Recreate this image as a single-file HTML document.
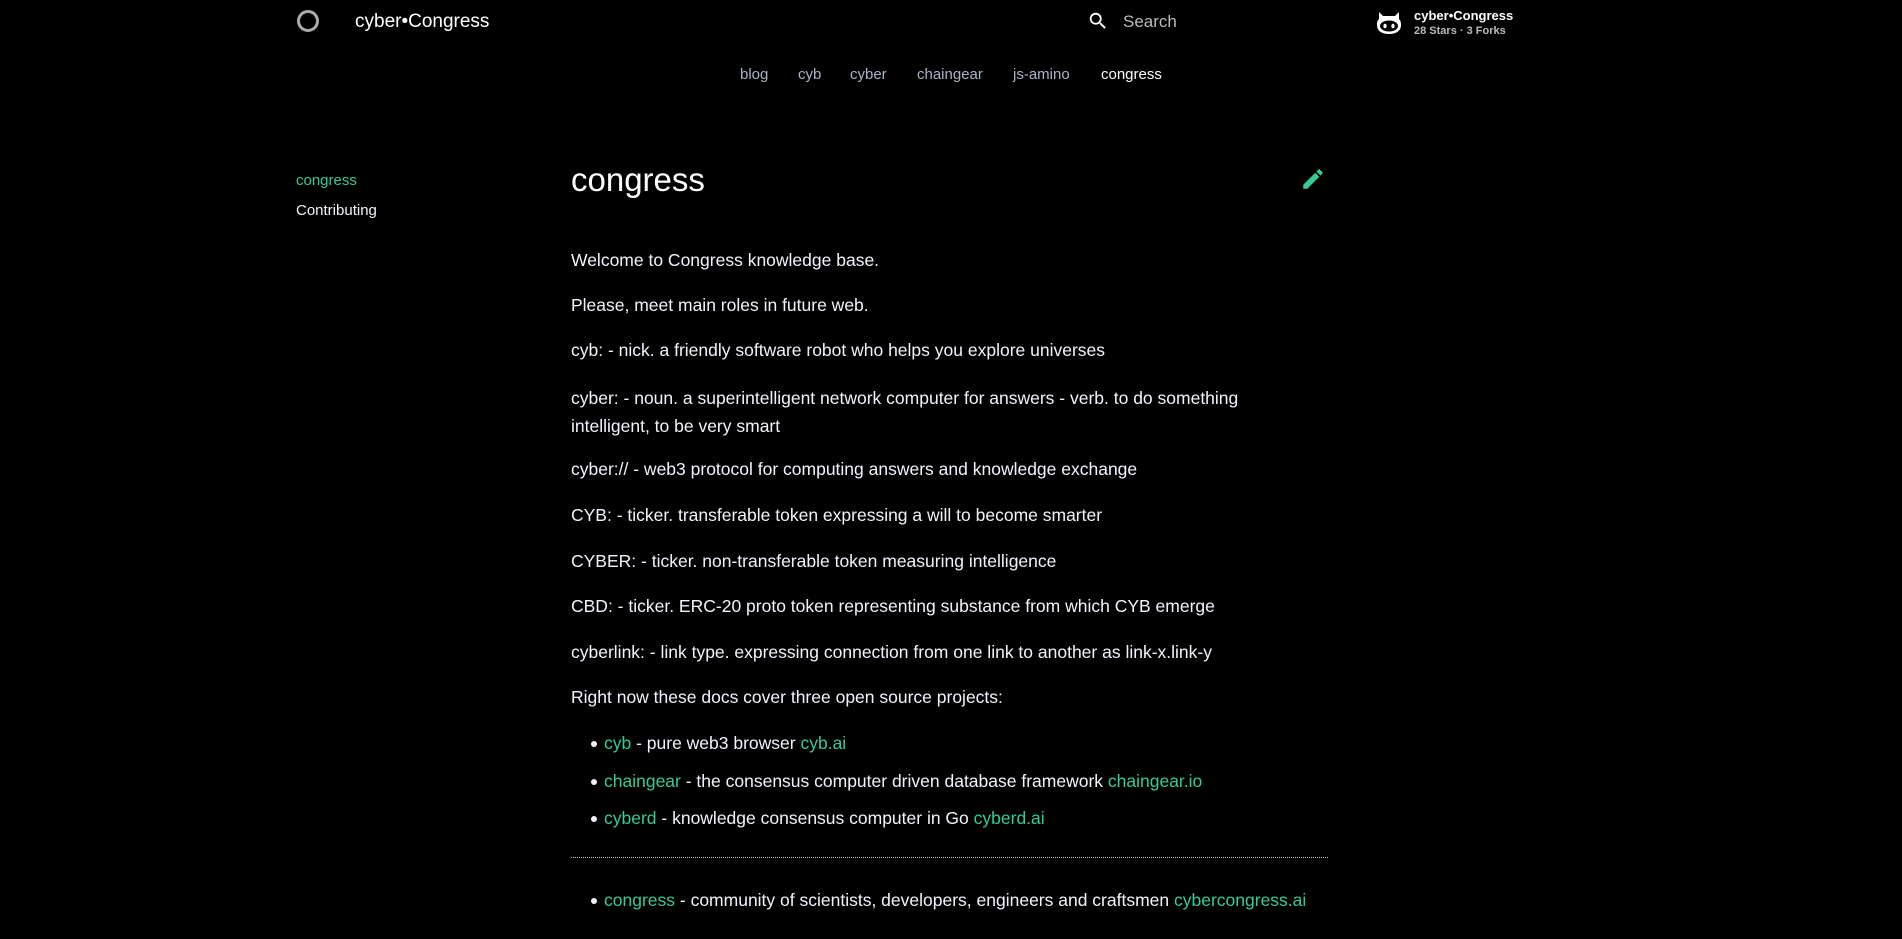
<!DOCTYPE html>
<html><head><meta charset="utf-8"><style>
*{margin:0;padding:0;box-sizing:border-box}
body{width:1902px;height:939px;background:#000;color:#f2f2ff;font-family:"Liberation Sans",sans-serif;overflow:hidden;position:relative}
.a{position:absolute;white-space:nowrap}
.t{color:#36c99a}
.nav span{position:absolute;top:66px;font-size:15px;color:#a8b4c8}
p,li{font-size:17.5px;line-height:22px}
.c{position:absolute;left:571px;width:757px}
.c p{position:absolute;left:0;white-space:nowrap}
.li{position:absolute;left:0;white-space:nowrap}
.li:before{content:"";position:absolute;left:20px;top:9px;width:6px;height:6px;border-radius:50%;background:#f2f2ff}
.li span.x{margin-left:33px}
</style></head><body>
<div class="a" style="left:297px;top:10px;width:22px;height:22px;border-radius:50%;border:3px solid #aaa"></div>
<div class="a" style="left:355px;top:11px;font-size:19px;color:#fff">cyber•Congress</div>
<svg class="a" style="left:1087px;top:10px" width="22" height="22" viewBox="0 0 24 24"><path fill="#fff" d="M9.5 3A6.5 6.5 0 0 1 16 9.5c0 1.61-.59 3.090-1.56 4.23l.27.27h.79l5 5-1.5 1.5-5-5v-.79l-.27-.27A6.52 6.520 0 0 1 9.5 16 6.5 6.5 0 0 1 3 9.5 6.5 6.5 0 0 1 9.5 3m0 2C7 5 5 7 5 9.5S7 14 9.5 14 14 12 14 9.5 12 5 9.5 5z"/></svg>
<div class="a" style="left:1123px;top:12px;font-size:17px;color:#bbb">Search</div>
<svg class="a" style="left:1376px;top:11px" width="26" height="24" viewBox="0 0 26 24"><path fill="#fff" d="M3 1l4 4h12l4-4v7c2 2 2 4 2 6 0 6-5 9-12 9S1 20 1 14c0-2 0-4 2-6z"/><ellipse cx="13" cy="15" rx="9" ry="5.5" fill="#000"/><ellipse cx="9" cy="15" rx="1.6" ry="2.3" fill="#fff"/><ellipse cx="17" cy="15" rx="1.6" ry="2.3" fill="#fff"/></svg>
<div class="a" style="left:1414px;top:8px;font-size:13px;font-weight:bold;color:#fff">cyber•Congress</div>
<div class="a" style="left:1414px;top:25px;font-size:11px;font-weight:bold;color:#bbb">28 Stars · 3 Forks</div>
<div class="nav">
<span style="left:740px">blog</span><span style="left:798px">cyb</span><span style="left:850px">cyber</span><span style="left:917px">chaingear</span><span style="left:1013px">js-amino</span><span style="left:1101px;color:#fff">congress</span>
</div>
<div class="a t" style="left:296px;top:172px;font-size:15px">congress</div>
<div class="a" style="left:296px;top:202px;font-size:15px">Contributing</div>
<div class="a" style="left:571px;top:161px;font-size:33px;color:#fff">congress</div>
<svg class="a" style="left:1300px;top:166px" width="26" height="26" viewBox="0 0 24 24"><path fill="#36c99a" d="M3 17.25V21h3.75L17.81 9.94l-3.75-3.75L3 17.25zM20.71 7.04a1 1 0 0 0 0-1.41l-2.34-2.34a1 1 0 0 0-1.41 0l-1.830 1.83 3.75 3.75 1.83-1.83z"/></svg>
<div class="c" style="top:2px">
<p style="top:247px">Welcome to Congress knowledge base.</p>
<p style="top:292px">Please, meet main roles in future web.</p>
<p style="top:337px">cyb: - nick. a friendly software robot who helps you explore universes</p>
<p style="top:382px;line-height:28px">cyber: - noun. a superintelligent network computer for answers - verb. to do something<br>intelligent, to be very smart</p>
<p style="top:456px">cyber:// - web3 protocol for computing answers and knowledge exchange</p>
<p style="top:502px">CYB: - ticker. transferable token expressing a will to become smarter</p>
<p style="top:548px">CYBER: - ticker. non-transferable token measuring intelligence</p>
<p style="top:593px">CBD: - ticker. ERC-20 proto token representing substance from which CYB emerge</p>
<p style="top:639px">cyberlink: - link type. expressing connection from one link to another as link-x.link-y</p>
<p style="top:684px">Right now these docs cover three open source projects:</p>
<p class="li" style="top:730px"><span class="x t">cyb</span> - pure web3 browser <span class="t">cyb.ai</span></p>
<p class="li" style="top:768px"><span class="x t">chaingear</span> - the consensus computer driven database framework <span class="t">chaingear.io</span></p>
<p class="li" style="top:805px"><span class="x t">cyberd</span> - knowledge consensus computer in Go <span class="t">cyberd.ai</span></p>
<div style="position:absolute;top:855px;left:0;width:757px;border-top:1px dotted #ccc"></div>
<p class="li" style="top:887px"><span class="x t">congress</span> - community of scientists, developers, engineers and craftsmen <span class="t">cybercongress.ai</span></p>
</div>
</body></html>
